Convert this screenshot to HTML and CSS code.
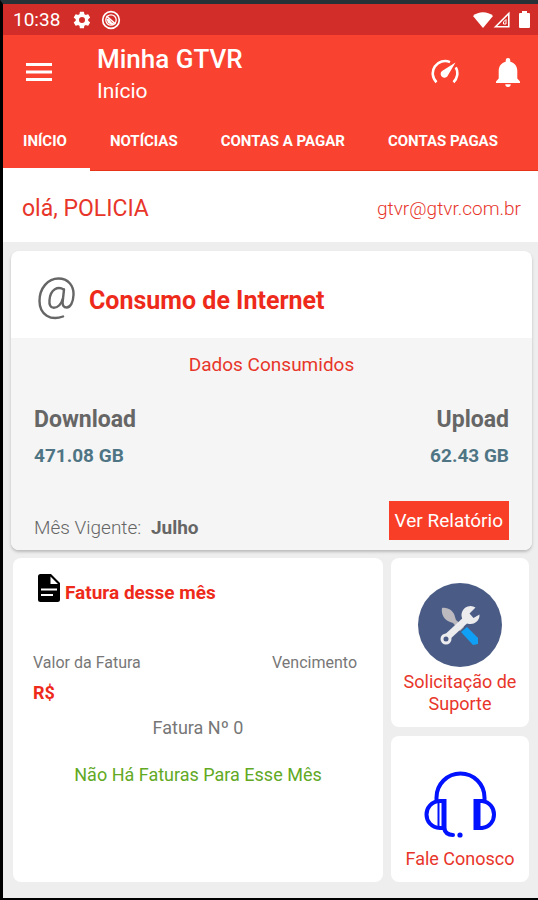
FILE: index.html
```html
<!DOCTYPE html>
<html lang="pt-BR">
<head>
<meta charset="utf-8">
<meta name="viewport" content="width=device-width, initial-scale=1">
<title>Minha GTVR</title>
<link rel="stylesheet" href="styles.css">
</head>
<body>
<div class="screen">
  <div class="status">
    <span class="clock">10:38</span>
    <svg class="status-icon" width="20" height="20" viewBox="0 0 24 24" fill="currentColor" aria-hidden="true"><path d="M19.4 13a7.500 7.500 0 0 0 0-2l2.100-1.600a.5.5 0 0 0 .1-.6l-2-3.500a.5.5 0 0 0-.6-.2l-2.500 1a7.300 7.300 0 0 0-1.700-1l-.4-2.600a.5.5 0 0 0-.5-.5h-4a.5.5 0 0 0-.5.5L9 5.100a7.300 7.300 0 0 0-1.700 1l-2.500-1a.5.5 0 0 0-.6.2l-2 3.500a.5.5 0 0 0 .1.600L4.500 11a7.500 7.500 0 0 0 0 2l-2.200 1.600a.5.5 0 0 0-.1.600l2 3.500c.1.200.4.300.6.200l2.500-1a7.300 7.300 0 0 0 1.700 1l.4 2.600c0 .3.200.5.5.5h4c.3 0 .5-.2.500-.5l.4-2.600a7.300 7.300 0 0 0 1.700-1l2.500 1c.2.100.5 0 .6-.2l2-3.500a.5.5 0 0 0-.1-.6zM12 15.600a3.600 3.600 0 1 1 0-7.200 3.600 3.600 0 0 1 0 7.200z"/></svg>
    <svg class="status-icon" width="20" height="20" viewBox="0 0 20 20" fill="none" stroke="currentColor" aria-hidden="true"><circle cx="10" cy="10" r="8.300" stroke-width="1.700"/><circle cx="10" cy="10" r="5.200" stroke-width="1.300"/><path d="M5.500 6l9 8" stroke-width="1.600"/><path d="M5.500 9c2-.5 3 .5 4 2s2 2 3.500 2.500l-2 1.500-4-2z" fill="currentColor" stroke="none"/></svg>
    <span class="status-right">
      <svg width="20" height="16" viewBox="0 0 20 16" fill="currentColor" aria-hidden="true"><path d="M0 4C5.500-1 14.500-1 20 4L10 16z"/></svg>
      <svg width="17" height="17" viewBox="0 0 17 17" aria-hidden="true"><path d="M2.500 15.800L15.800 2.500v13.300z" fill="none" stroke="currentColor" stroke-width="1.600"/><path d="M10.500 13V11L13 8.500V13z" fill="none" stroke="currentColor" stroke-width="1"/></svg>
      <svg class="battery" width="11" height="17" viewBox="0 0 11 17" fill="currentColor" aria-hidden="true"><path d="M3 0h5v2h2a1 1 0 0 1 1 1v13a1 1 0 0 1-1 1H1a1 1 0 0 1-1-1V3a1 1 0 0 1 1-1h2z"/></svg>
    </span>
  </div>

  <header class="appbar">
    <button class="icon-button" type="button" aria-label="Menu">
      <svg width="26" height="18" viewBox="0 0 26 18" fill="currentColor" aria-hidden="true"><path d="M0 0h26v3H0zM0 7.500h26v3H0zM0 15h26v3H0z"/></svg>
    </button>
    <div class="heading">
      <h1>Minha GTVR</h1>
      <p>Início</p>
    </div>
    <button class="icon-button" type="button" aria-label="Velocidade">
      <svg width="28" height="26" viewBox="0 0 28 26" aria-hidden="true"><path d="M5.500 23.200A12.300 12.300 0 0 1 19 3.100M24.800 8.400A12.300 12.300 0 0 1 22.500 23.200" fill="none" stroke="currentColor" stroke-width="2.600"/><path d="M24.500 3.500L17 16.200a3.800 3.800 0 1 1-6-4.200z" fill="currentColor"/></svg>
    </button>
    <button class="icon-button" type="button" aria-label="Notificações">
      <svg width="26" height="29" viewBox="0 0 26 29" fill="currentColor" aria-hidden="true"><path d="M10.700 3.700V2.300a2.300 2.300 0 0 1 4.600 0v1.400c4.500 1 7 4.600 7 9.300v7.500l2.700 3V25H1v-1.500l2.700-3V13c0-4.700 2.500-8.300 7-9.300zM10.300 26.200h5.400a2.700 2.700 0 0 1-5.400 0z"/></svg>
    </button>
  </header>

  <nav class="tabs">
    <a class="tab active" href="#inicio" aria-current="page">INÍCIO</a>
    <a class="tab" href="#noticias">NOTÍCIAS</a>
    <a class="tab" href="#contas-a-pagar">CONTAS A PAGAR</a>
    <a class="tab" href="#contas-pagas">CONTAS PAGAS</a>
  </nav>

  <div class="user">
    <span class="hello">olá, POLICIA</span>
    <span class="mail">gtvr@gtvr.com.br</span>
  </div>

  <main>
    <section class="card usage">
      <div class="usage-head">
        <svg width="38" height="44" viewBox="0 0 38 44" fill="none" stroke="#666" stroke-width="2.400" stroke-linecap="round" aria-hidden="true"><path d="M26 40.500C14 45 2.500 39 2.500 25 2.500 12 11 2.500 21.500 2.500 31 2.500 37 9.500 36.500 19c-.3 7-3 12.500-6.800 12.500-3.200 0-4.400-2.500-4-6L27 13.500"/><path d="M26.800 13.500C21 10 13.500 13 12.500 24c-.5 4.800 1 7.800 4.300 7.800 4 0 7.800-4 8.700-8.300"/></svg>
        <h2>Consumo de Internet</h2>
      </div>
      <div class="usage-body">
        <p class="caption">Dados Consumidos</p>
        <dl class="totals">
          <div><dt>Download</dt><dd>471.08 GB</dd></div>
          <div class="end"><dt>Upload</dt><dd>62.43 GB</dd></div>
        </dl>
        <div class="usage-foot">
          <p class="month">Mês Vigente: <strong>Julho</strong></p>
          <button class="report" type="button">Ver Relatório</button>
        </div>
      </div>
    </section>

    <div class="columns">
      <section class="card invoice">
        <div class="invoice-head">
          <svg width="22" height="28" viewBox="0 0 22 28" aria-hidden="true"><path d="M2.500 0H13l9 9v16.500a2.500 2.500 0 0 1-2.500 2.500h-17A2.500 2.500 0 0 1 0 25.500v-23A2.500 2.500 0 0 1 2.500 0z" fill="#000"/><path d="M12.500 2.500V10H20zM3 14.500h16v2H3zM3 20h12v2H3z" fill="#fff"/></svg>
          <h3>Fatura desse mês</h3>
        </div>
        <div class="invoice-labels"><span>Valor da Fatura</span><span>Vencimento</span></div>
        <p class="amount">R$</p>
        <p class="number">Fatura Nº 0</p>
        <p class="none">Não Há Faturas Para Esse Mês</p>
      </section>
      <div class="shortcuts">
        <a class="card shortcut support" href="#suporte">
          <svg width="84" height="84" viewBox="0 0 84 84" aria-hidden="true"><circle cx="42" cy="42" r="42" fill="#4a5c85"/><path d="M24 25c6-1 12 3 13 9l1 3 8 7-4 4-7-8-3-1c-6-2-9-8-8-14z" fill="#bcb9bf"/><path d="M43 49l6-5 11 11v6l-5 1z" fill="#0fa0f5"/><path d="M26 57L52 33" stroke="#ececef" stroke-width="7"/><circle cx="28" cy="56" r="4" fill="#4a5c85" stroke="#ececef" stroke-width="3"/><path d="M57.500 24.500a9 9 0 1 0 4 7l-6 3.500-4-4.500z" fill="#ececef"/></svg>
          <span>Solicitação de Suporte</span>
        </a>
        <a class="card shortcut contact" href="#contato">
          <svg width="72" height="68" viewBox="0 0 72 68" fill="none" stroke="#0012ff" stroke-width="4" aria-hidden="true"><path d="M12.500 30V26.500a24 24 0 0 1 48 0V30"/><path d="M20 30h-4C-2 31-2 56 16 57h4"/><path d="M14.500 30v27" stroke-width="2"/><path d="M20 28v31" stroke-width="5"/><path d="M54 30h4c16 2 16 25 0 27h-4z"/><path d="M53 28v31" stroke-width="7"/><path d="M20 57c1 5 4 7 9 7" stroke-linecap="round"/><circle cx="36" cy="64" r="2.600" fill="#0012ff" stroke="none"/></svg>
          <span>Fale Conosco</span>
        </a>
      </div>
    </div>
  </main>
</div>
</body>
</html>
```
FILE: styles.css
```css
* { box-sizing: border-box; }
body {
  margin: 0;
  background: #000;
  color: #666;
  font-family: Roboto, "Liberation Sans", sans-serif;
}
h1, h2, h3, p, dl, dd { margin: 0; }
a { text-decoration: none; }
button { border: 0; padding: 0; background: none; color: inherit; font: inherit; cursor: pointer; }
svg { display: block; flex: none; }

.screen {
  display: flex;
  flex-direction: column;
  min-height: 100vh;
  border-top: 4px solid #263236;
  border-left: 3px solid #000;
  border-bottom: 2px solid #000;
  background: #eee;
}

.status {
  display: flex;
  align-items: center;
  height: 31px;
  padding: 0 8px 0 10px;
  background: #d32d29;
  color: #fff;
}
.clock { font-size: 19px; }
.status-icon { margin-left: 9px; }
.clock + .status-icon { margin-left: 12px; }
.status-right { display: flex; align-items: center; margin-left: auto; }
.battery { margin-left: 9px; }

.appbar {
  display: flex;
  align-items: center;
  gap: 36px;
  height: 74px;
  padding: 0 17px 0 23px;
  background: #f9422f;
  color: #fff;
}
.heading { flex: 1; margin-left: 9px; padding-top: 6px; }
.heading h1 { font-size: 26px; line-height: 32px; font-weight: 500; }
.heading p { font-size: 21px; line-height: 32px; }

.tabs {
  display: flex;
  height: 62px;
  background: #f9422f;
  box-shadow: inset 0 -1px #e63419;
  overflow: hidden;
}
.tab {
  padding: 0 23px 0 20px;
  border-bottom: 3px solid transparent;
  color: #fff;
  font-size: 15px;
  line-height: 64px;
  font-weight: 700;
  white-space: nowrap;
}
.tab.active { border-color: #fff; }

.user {
  display: flex;
  align-items: center;
  justify-content: space-between;
  height: 71px;
  padding: 4px 17px 0 19px;
  background: #fff;
  color: #e8352a;
}
.hello { font-size: 23px; }
.mail { font-size: 19px; font-weight: 300; }

main {
  flex: 1;
  display: flex;
  flex-direction: column;
  gap: 8px;
  padding: 9px 6px 16px 8px;
}
.card { border-radius: 8px; background: #fff; }

.usage { overflow: hidden; box-shadow: 0 2px 3px #bbb; }
.usage-head { display: flex; align-items: center; gap: 14px; height: 87px; padding: 6px 26px 0; }
.usage-head h2 { padding-top: 6px; color: #ee2a1b; font-size: 25px; font-weight: 700; }
.usage-body { padding: 11px 23px 10px; background: #f5f5f5; }
.caption { color: #e8352a; font-size: 19px; line-height: 32px; text-align: center; }
.totals { display: flex; justify-content: space-between; padding-top: 21px; }
.totals dt { font-size: 23px; line-height: 36px; font-weight: 700; }
.totals dd { color: #4f7584; font-size: 19px; line-height: 35px; font-weight: 700; }
.end { text-align: right; }
.usage-foot { display: flex; align-items: flex-end; justify-content: space-between; padding-top: 28px; }
.month { font-size: 19px; line-height: 24px; font-weight: 300; }
.month strong { margin-left: 5px; font-weight: 700; }
.report { height: 39px; padding: 0 6px; background: #f93e28; color: #fff; font-size: 19px; }

.columns { flex: 1; display: grid; grid-template-columns: 370fr 138fr; gap: 8px; padding: 0 3px 0 2px; }
.invoice { padding: 14px 26px 14px 20px; color: #777; }
.invoice-head { display: flex; align-items: center; gap: 5px; padding-left: 5px; }
.invoice-head h3 { padding-top: 10px; color: #ee2a1b; font-size: 19px; line-height: 22px; font-weight: 700; }
.invoice-labels { display: flex; justify-content: space-between; padding-top: 47px; font-size: 16px; line-height: 24px; }
.amount { padding-top: 6px; color: #ee2a1b; font-size: 18px; line-height: 24px; font-weight: 700; }
.number { padding-top: 10px; padding-left: 6px; font-size: 18px; line-height: 26px; text-align: center; }
.none { padding-top: 20px; padding-left: 6px; color: #62a924; font-size: 18px; line-height: 28px; text-align: center; }

.shortcuts { display: grid; grid-template-rows: 168fr 146fr; gap: 9px; }
.shortcut {
  display: flex;
  flex-direction: column;
  align-items: center;
  justify-content: flex-end;
  padding: 12px 8px;
  color: #e8352a;
  font-size: 18px;
  line-height: 22px;
  text-align: center;
}
.support { gap: 4px; }
.contact { gap: 9px; }
```
